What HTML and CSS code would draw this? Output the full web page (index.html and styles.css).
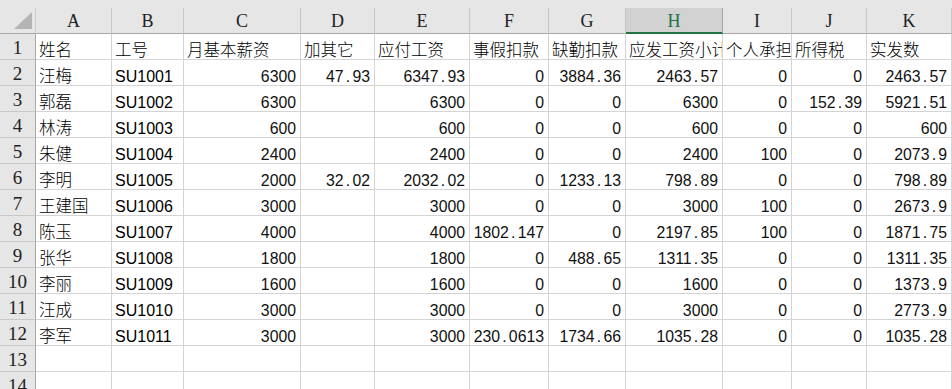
FILE: index.html
```html
<!DOCTYPE html>
<html lang="zh">
<head>
<meta charset="utf-8">
<title>Sheet</title>
<link rel="stylesheet" href="styles.css">
</head>
<body>
<div class="sheet">
  <div class="strip"></div>
  <div class="corner"><span class="tri"></span></div>
  <div class="ch">A</div><div class="ch">B</div><div class="ch">C</div><div class="ch">D</div><div class="ch">E</div><div class="ch">F</div><div class="ch">G</div><div class="ch sel">H</div><div class="ch">I</div><div class="ch">J</div><div class="ch">K</div><div class="ch rest"></div>

  <div class="rh">1</div><div class="c t">姓名</div><div class="c t">工号</div><div class="c t">月基本薪资</div><div class="c t">加其它</div><div class="c t">应付工资</div><div class="c t">事假扣款</div><div class="c t">缺勤扣款</div><div class="c t">应发工资小计</div><div class="c t">个人承担</div><div class="c t">所得税</div><div class="c t">实发数</div><div class="c rest"></div>

  <div class="rh">2</div><div class="c t">汪梅</div><div class="c s">SU1001</div><div class="c n">6300</div><div class="c n">47<span class="dot">.</span>93</div><div class="c n">6347<span class="dot">.</span>93</div><div class="c n">0</div><div class="c n">3884<span class="dot">.</span>36</div><div class="c n">2463<span class="dot">.</span>57</div><div class="c n">0</div><div class="c n">0</div><div class="c n">2463<span class="dot">.</span>57</div><div class="c rest"></div>

  <div class="rh">3</div><div class="c t">郭磊</div><div class="c s">SU1002</div><div class="c n">6300</div><div class="c n"></div><div class="c n">6300</div><div class="c n">0</div><div class="c n">0</div><div class="c n">6300</div><div class="c n">0</div><div class="c n">152<span class="dot">.</span>39</div><div class="c n">5921<span class="dot">.</span>51</div><div class="c rest"></div>

  <div class="rh">4</div><div class="c t">林涛</div><div class="c s">SU1003</div><div class="c n">600</div><div class="c n"></div><div class="c n">600</div><div class="c n">0</div><div class="c n">0</div><div class="c n">600</div><div class="c n">0</div><div class="c n">0</div><div class="c n">600</div><div class="c rest"></div>

  <div class="rh">5</div><div class="c t">朱健</div><div class="c s">SU1004</div><div class="c n">2400</div><div class="c n"></div><div class="c n">2400</div><div class="c n">0</div><div class="c n">0</div><div class="c n">2400</div><div class="c n">100</div><div class="c n">0</div><div class="c n">2073<span class="dot">.</span>9</div><div class="c rest"></div>

  <div class="rh">6</div><div class="c t">李明</div><div class="c s">SU1005</div><div class="c n">2000</div><div class="c n">32<span class="dot">.</span>02</div><div class="c n">2032<span class="dot">.</span>02</div><div class="c n">0</div><div class="c n">1233<span class="dot">.</span>13</div><div class="c n">798<span class="dot">.</span>89</div><div class="c n">0</div><div class="c n">0</div><div class="c n">798<span class="dot">.</span>89</div><div class="c rest"></div>

  <div class="rh">7</div><div class="c t">王建国</div><div class="c s">SU1006</div><div class="c n">3000</div><div class="c n"></div><div class="c n">3000</div><div class="c n">0</div><div class="c n">0</div><div class="c n">3000</div><div class="c n">100</div><div class="c n">0</div><div class="c n">2673<span class="dot">.</span>9</div><div class="c rest"></div>

  <div class="rh">8</div><div class="c t">陈玉</div><div class="c s">SU1007</div><div class="c n">4000</div><div class="c n"></div><div class="c n">4000</div><div class="c n">1802<span class="dot">.</span>147</div><div class="c n">0</div><div class="c n">2197<span class="dot">.</span>85</div><div class="c n">100</div><div class="c n">0</div><div class="c n">1871<span class="dot">.</span>75</div><div class="c rest"></div>

  <div class="rh">9</div><div class="c t">张华</div><div class="c s">SU1008</div><div class="c n">1800</div><div class="c n"></div><div class="c n">1800</div><div class="c n">0</div><div class="c n">488<span class="dot">.</span>65</div><div class="c n">1311<span class="dot">.</span>35</div><div class="c n">0</div><div class="c n">0</div><div class="c n">1311<span class="dot">.</span>35</div><div class="c rest"></div>

  <div class="rh">10</div><div class="c t">李丽</div><div class="c s">SU1009</div><div class="c n">1600</div><div class="c n"></div><div class="c n">1600</div><div class="c n">0</div><div class="c n">0</div><div class="c n">1600</div><div class="c n">0</div><div class="c n">0</div><div class="c n">1373<span class="dot">.</span>9</div><div class="c rest"></div>

  <div class="rh">11</div><div class="c t">汪成</div><div class="c s">SU1010</div><div class="c n">3000</div><div class="c n"></div><div class="c n">3000</div><div class="c n">0</div><div class="c n">0</div><div class="c n">3000</div><div class="c n">0</div><div class="c n">0</div><div class="c n">2773<span class="dot">.</span>9</div><div class="c rest"></div>

  <div class="rh">12</div><div class="c t">李军</div><div class="c s">SU1011</div><div class="c n">3000</div><div class="c n"></div><div class="c n">3000</div><div class="c n">230<span class="dot">.</span>0613</div><div class="c n">1734<span class="dot">.</span>66</div><div class="c n">1035<span class="dot">.</span>28</div><div class="c n">0</div><div class="c n">0</div><div class="c n">1035<span class="dot">.</span>28</div><div class="c rest"></div>

  <div class="rh">13</div><div class="c"></div><div class="c"></div><div class="c"></div><div class="c"></div><div class="c"></div><div class="c"></div><div class="c"></div><div class="c"></div><div class="c"></div><div class="c"></div><div class="c"></div><div class="c rest"></div>

  <div class="rh">14</div><div class="c"></div><div class="c"></div><div class="c"></div><div class="c"></div><div class="c"></div><div class="c"></div><div class="c"></div><div class="c"></div><div class="c"></div><div class="c"></div><div class="c"></div><div class="c rest"></div>
</div>
</body>
</html>
```

FILE: styles.css
```css
html, body {
  margin: 0;
  padding: 0;
  background: #ffffff;
  overflow: hidden;
  width: 952px;
  height: 389px;
}

.sheet {
  display: grid;
  grid-template-columns: 36px 76px 72px 117px 74px 95px 79px 77px 97px 69px 75px 85px 1fr;
  grid-template-rows: 8px 26px repeat(14, 26px);
  width: 952px;
}

.strip {
  grid-column: 1 / -1;
  background: #e6e6e6;
}

.corner {
  position: relative;
  background: #e6e6e6;
  border-right: 1px solid #d0d0d0;
  border-bottom: 1px solid #a8a8a8;
  box-sizing: border-box;
}

.tri {
  position: absolute;
  right: 3px;
  bottom: 4px;
  width: 0;
  height: 0;
  border-left: 18px solid transparent;
  border-bottom: 17px solid #b4b4b4;
}

.ch {
  background: #e6e6e6;
  border-right: 1px solid #c6c6c6;
  border-bottom: 1px solid #a8a8a8;
  box-sizing: border-box;
  display: flex;
  align-items: center;
  justify-content: center;
  font-family: "Liberation Serif", serif;
  font-size: 18px;
  color: #222;
  padding-top: 2px;
}

.ch.sel {
  background: #d2d2d2;
  color: #217346;
  border-bottom: 2px solid #217346;
  border-right-color: #a8a8a8;
}

.ch.rest {
  border-right: none;
}

.rh {
  background: #e6e6e6;
  border-right: 1px solid #a8a8a8;
  border-bottom: 1px solid #c8c8c8;
  box-sizing: border-box;
  display: flex;
  align-items: flex-end;
  justify-content: center;
  padding-bottom: 0;
  font-family: "Liberation Serif", serif;
  font-size: 19px;
  line-height: 22px;
  color: #222;
}

.c {
  border-right: 1px solid #d4d4d4;
  border-bottom: 1px solid #d4d4d4;
  box-sizing: border-box;
  display: flex;
  align-items: flex-end;
  overflow: hidden;
  white-space: nowrap;
  color: #000;
}

.c.rest {
  border-right: none;
}

.t {
  padding: 0 0 1px 3px;
  font-family: "Noto Sans CJK SC", sans-serif;
  font-size: 16.5px;
  font-weight: 300;
  line-height: 18px;
}

.s {
  padding: 0 0 0 3px;
  font-family: "Liberation Sans", Arial, sans-serif;
  font-size: 16px;
  line-height: 17px;
}

.n {
  justify-content: flex-end;
  padding: 0 4px 0 0;
  font-family: "Liberation Sans", Arial, sans-serif;
  font-size: 15.8px;
  line-height: 17px;
  color: #111;
}

.dot {
  padding: 0 2.2px;
}
```
